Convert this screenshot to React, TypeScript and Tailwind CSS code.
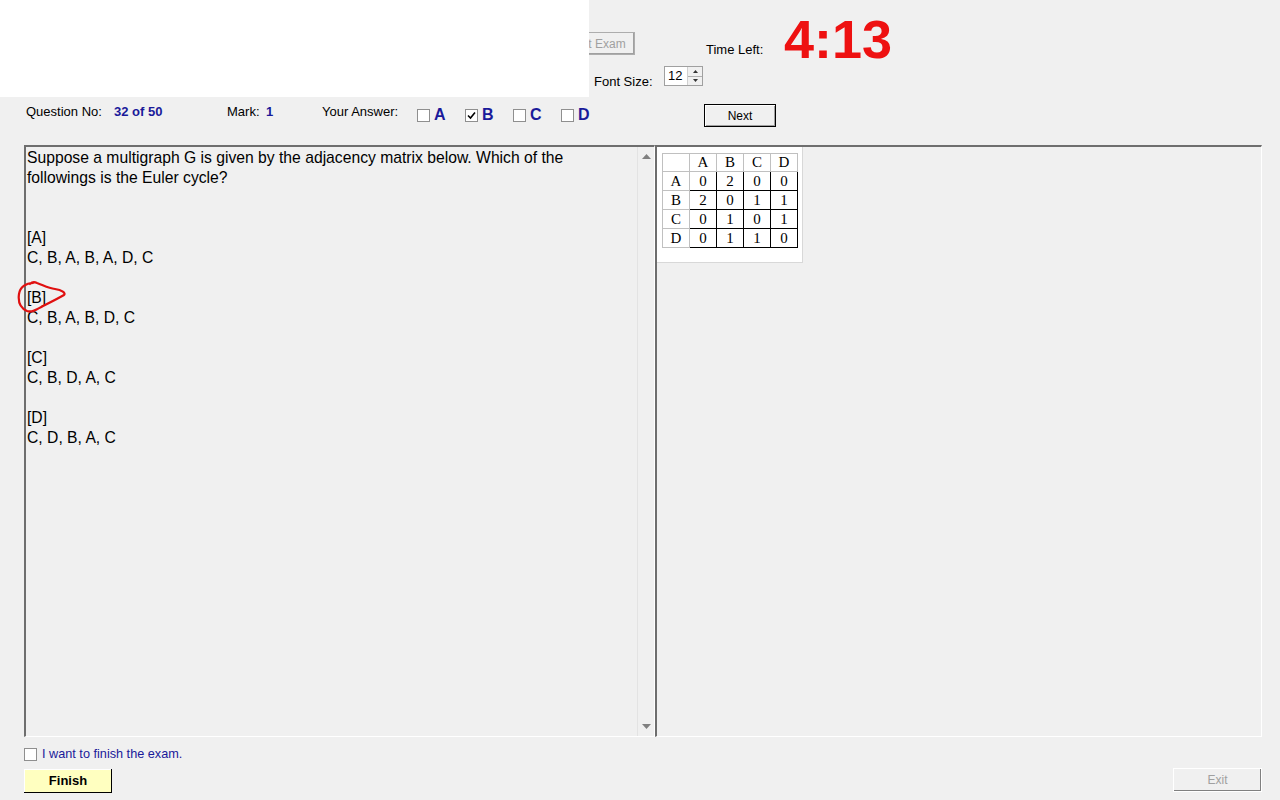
import React from 'react';

const Check = ({ checked = false }: { checked?: boolean }) => (
  <span className="inline-flex h-[13px] w-[13px] shrink-0 items-center justify-center border border-[#8f8f8f] bg-white">
    {checked && (
      <svg width="9" height="9" viewBox="0 0 9 9">
        <path d="M1 4.5 L3.5 7 L8 1.5" fill="none" stroke="#000" strokeWidth="1.6" />
      </svg>
    )}
  </span>
);

const matrix = [
  ['A', '0', '2', '0', '0'],
  ['B', '2', '0', '1', '1'],
  ['C', '0', '1', '0', '1'],
  ['D', '0', '1', '1', '0'],
];

const options = [
  { key: 'A', text: 'C, B, A, B, A, D, C' },
  { key: 'B', text: 'C, B, A, B, D, C' },
  { key: 'C', text: 'C, B, D, A, C' },
  { key: 'D', text: 'C, D, B, A, C' },
];

export default function App() {
  return (
    <div
      className="flex h-[800px] w-[1280px] flex-col overflow-hidden bg-[#f0f0f0] text-[13px] text-black"
      style={{ fontFamily: '"Liberation Sans", Arial, sans-serif' }}
    >
      {/* top bar */}
      <div className="relative h-[97px] shrink-0">
        <div className="absolute left-0 top-0 z-10 h-[97px] w-[589px] bg-white" />
        <button className="absolute left-[557px] top-[32px] h-[23px] w-[78px] border border-[#adadad] bg-[#f0f0f0] text-[12px] text-[#a0a0a0] shadow-[inset_-1px_-1px_0_#a0a0a0]">
          Start Exam
        </button>
        <span className="absolute left-[706px] top-[40px] text-[13px]">Time Left:</span>
        <span className="absolute left-[784px] top-[7px] text-[54px] font-bold leading-[64px] text-[#ee1111]">4:13</span>
        <span className="absolute left-[594px] top-[72px] text-[13px]">Font Size:</span>
        <div className="absolute left-[664px] top-[66px] flex h-[20px] w-[39px] items-stretch border border-[#a0a0a0] bg-white">
          <span className="flex-1 pl-[3px] text-[13px] leading-[18px]">12</span>
          <div className="flex w-[15px] flex-col border-l border-[#d0d0d0] bg-[#f0f0f0]">
            <div className="flex flex-1 items-center justify-center border-b border-[#b0b0b0]">
              <svg width="5" height="3" viewBox="0 0 5 3"><path d="M0 3 L2.5 0 L5 3Z" fill="#333" /></svg>
            </div>
            <div className="flex flex-1 items-center justify-center">
              <svg width="5" height="3" viewBox="0 0 5 3"><path d="M0 0 L2.5 3 L5 0Z" fill="#333" /></svg>
            </div>
          </div>
        </div>
      </div>

      {/* question info row */}
      <div className="flex h-[48px] shrink-0 items-start pl-[26px] pt-[7px] text-[13px]">
        <span className="w-[88px] leading-[15px]">Question No:</span>
        <span className="w-[113px] font-bold leading-[15px] text-[#1a1a9a]">32 of 50</span>
        <span className="w-[39px] leading-[15px]">Mark:</span>
        <span className="w-[56px] font-bold leading-[15px] text-[#1a1a9a]">1</span>
        <span className="w-[95px] leading-[15px]">Your Answer:</span>
        <div className="mt-[3px] flex items-center">
          {['A', 'B', 'C', 'D'].map((l) => (
            <span key={l} className="flex w-[48px] items-center">
              <Check checked={l === 'B'} />
              <span className="ml-[4px] text-[16px] font-bold leading-[16px] text-[#1a1a9a]">{l}</span>
            </span>
          ))}
        </div>
        <button className="ml-[95px] h-[23px] w-[72px] border border-black bg-[#f0f0f0] text-[12px] shadow-[inset_1px_1px_0_#fff,inset_-1px_-1px_0_#a0a0a0]">
          Next
        </button>
      </div>

      {/* panels */}
      <div className="flex h-[592px] shrink-0 pl-[24px]">
        <div className="relative flex w-[631px] border-b border-l-2 border-r border-t-2 border-b-white border-l-[#6e6e6e] border-r-white border-t-[#6e6e6e]">
          <div className="flex-1 overflow-hidden pl-[1px] pt-[1px] text-[15.7px] leading-[20px]">
            <p>Suppose a multigraph G is given by the adjacency matrix below. Which of the</p>
            <p>followings is the Euler cycle?</p>
            <div className="h-[40px]" />
            {options.map((o) => (
              <div key={o.key} className="mb-[20px]">
                <p>[{o.key}]</p>
                <p>{o.text}</p>
              </div>
            ))}
          </div>
          <div className="flex w-[17px] flex-col items-center justify-between border-l border-[#e3e3e3] bg-[#f0f0f0] py-[7px]">
            <svg width="9" height="5" viewBox="0 0 9 5"><path d="M0 5 L4.5 0 L9 5Z" fill="#808080" /></svg>
            <svg width="9" height="5" viewBox="0 0 9 5"><path d="M0 0 L4.5 5 L9 0Z" fill="#808080" /></svg>
          </div>
          <svg className="absolute left-[-9px] top-[133px]" width="52" height="36" viewBox="0 0 52 36">
            <path
              d="M16 3 C9 3 3 7 2 14 C1 21 3 28 10 31 C16 33 20 29 26 26 C34 22 42 18 47 15 C49 13 45 10 38 9 C31 8 26 5 20 3 C18 2 15 2 13 4"
              fill="none"
              stroke="#e01010"
              strokeWidth="2.2"
              strokeLinecap="round"
            />
          </svg>
        </div>
        <div className="flex w-[607px] border-b border-l-2 border-r border-t-2 border-b-white border-l-[#6e6e6e] border-r-white border-t-[#6e6e6e]">
          <div className="h-[116px] w-[146px] border-b border-r border-[#d8d8d8] bg-white pl-[5px] pt-[6px]">
            <table
              className="border-collapse text-[15px] leading-[17px]"
              style={{ fontFamily: '"Liberation Serif", "Times New Roman", serif' }}
            >
              <tbody>
                <tr>
                  <td className="h-[18px] w-[27px] border border-[#c0c0c0]" />
                  {['A', 'B', 'C', 'D'].map((h) => (
                    <td key={h} className="w-[27px] border border-[#c0c0c0] text-center">
                      {h}
                    </td>
                  ))}
                </tr>
                {matrix.map((row) => (
                  <tr key={row[0]}>
                    <td className="h-[19px] border border-[#c0c0c0] text-center">{row[0]}</td>
                    {row.slice(1).map((v, i) => (
                      <td key={i} className="border border-black text-center">
                        {v}
                      </td>
                    ))}
                  </tr>
                ))}
              </tbody>
            </table>
          </div>
        </div>
      </div>

      {/* bottom */}
      <div className="flex flex-1 items-start justify-between pl-[24px] pr-[18px] pt-[8px]">
        <div className="flex flex-col">
          <div className="flex items-center">
            <Check />
            <span className="ml-[5px] text-[12.7px] text-[#1a1a9a]">I want to finish the exam.</span>
          </div>
          <button className="mt-[5px] h-[24px] w-[88px] bg-[#ffffc0] text-[13px] font-bold shadow-[inset_-1px_-1px_0_#000,inset_1px_1px_0_#fff]">
            Finish
          </button>
        </div>
        <button className="mt-[23px] h-[24px] w-[89px] border border-white bg-[#f0f0f0] text-[12px] text-[#a0a0a0] shadow-[inset_-1px_-1px_0_#808080]">
          Exit
        </button>
      </div>
    </div>
  );
}
